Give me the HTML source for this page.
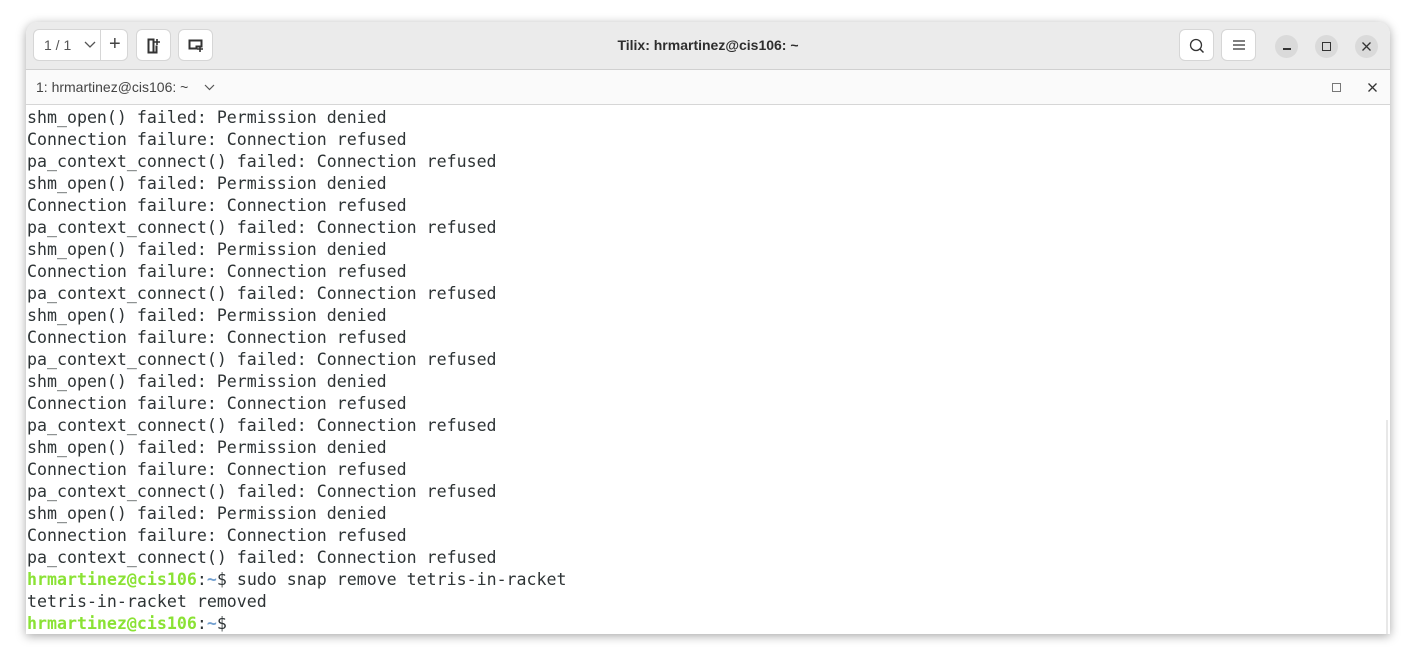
<!DOCTYPE html><html><head><style>
body{margin:0;width:1416px;height:664px;background:#fff;position:relative;overflow:hidden;font-family:"Liberation Sans",sans-serif}
.win{position:absolute;left:26px;top:22px;width:1364px;height:612px;border-radius:12px 12px 0 0;box-shadow:0 2px 10px rgba(0,0,0,.35);overflow:hidden;background:#fff}
.hdr{position:absolute;left:0;top:0;width:100%;height:47px;background:#ebebeb;border-bottom:1px solid #d0d0d0}
.btn{position:absolute;top:7px;height:32px;background:#fff;border:1px solid #d6d6d6;border-radius:6px;box-sizing:border-box}
.title{position:absolute;left:0;width:100%;top:15px;text-align:center;font-size:14px;font-weight:bold;color:#2e2e2e}
.circ{position:absolute;top:13px;width:23px;height:23px;border-radius:50%;background:#dadada}
.tab{position:absolute;left:0;top:48px;width:100%;height:34px;background:#fafafa;border-bottom:1px solid #d6d6d6;font-size:14px;color:#444}
.term{position:absolute;left:1px;top:85px;font-family:"DejaVu Sans Mono",monospace;font-size:16.6px;line-height:22px;color:#2e3436;white-space:pre}
.g{color:#8ae234;font-weight:bold}.b{color:#729fcf;font-weight:bold}
</style></head><body>
<div class="win">
<div class="hdr">
<div class="btn" style="left:7px;width:95px"><span style="position:absolute;left:10px;top:7px;font-size:14px;color:#555">1 / 1</span>
<svg style="position:absolute;left:50px;top:11px" width="12" height="8"><path d="M1 1l5 5 5-5" fill="none" stroke="#555" stroke-width="1.3"/></svg>
<div style="position:absolute;left:66px;top:0;width:1px;height:30px;background:#d6d6d6"></div>
<span style="position:absolute;left:75px;top:3px;font-size:20px;color:#444">+</span></div>
<div class="btn" style="left:110px;width:35px"><svg style="position:absolute;left:10px;top:8px" width="14" height="16"><path d="M1.5 1.5h5v13h-5z" fill="none" stroke="#333" stroke-width="2"/><path d="M6.5 14.5h3v-7" fill="none" stroke="#333" stroke-width="2"/><path d="M10 1v6M7 4h6" stroke="#333" stroke-width="1.6"/></svg></div>
<div class="btn" style="left:152px;width:35px"><svg style="position:absolute;left:9px;top:9px" width="18" height="14"><path d="M1.5 1.5h12v6h-5v2h-7z" fill="none" stroke="#333" stroke-width="2"/><path d="M12 7v6M9 10h6" stroke="#333" stroke-width="1.6"/></svg></div>
<div class="title">Tilix: hrmartinez@cis106: ~</div>
<div class="btn" style="left:1153px;width:35px"><svg style="position:absolute;left:9px;top:8px" width="16" height="16"><circle cx="7" cy="7" r="5.5" fill="none" stroke="#333" stroke-width="1.3"/><path d="M11 11l3.5 3.5" stroke="#333" stroke-width="1.5"/></svg></div>
<div class="btn" style="left:1195px;width:35px"><svg style="position:absolute;left:11px;top:10px" width="12" height="10"><path d="M0 1h12M0 5h12M0 9h12" stroke="#333" stroke-width="1.2"/></svg></div>
<div class="circ" style="left:1249px"><div style="position:absolute;left:8px;top:13px;width:8px;height:1.5px;background:#333"></div></div>
<div class="circ" style="left:1289px"><div style="position:absolute;left:7px;top:7px;width:7px;height:7px;border:1.3px solid #333"></div></div>
<div class="circ" style="left:1329px"><svg style="position:absolute;left:7px;top:7px" width="9" height="9"><path d="M0.5 .5l8 8M8.5 .5l-8 8" stroke="#333" stroke-width="1.3"/></svg></div>
</div>
<div class="tab"><span style="position:absolute;left:10px;top:9px">1: hrmartinez@cis106: ~</span>
<svg style="position:absolute;left:178px;top:14px" width="11" height="7"><path d="M1 1l4.5 4.5 4.5-4.5" fill="none" stroke="#555" stroke-width="1.2"/></svg>
<div style="position:absolute;left:1306px;top:13px;width:7px;height:7px;border:1px solid #777"></div>
<svg style="position:absolute;left:1342px;top:13px" width="9" height="9"><path d="M.5 .5l8 8M8.5 .5l-8 8" stroke="#333" stroke-width="1.3"/></svg>
</div>
<div style="position:absolute;left:1360px;top:398px;width:2px;height:214px;background:#e8e8e8"></div>
<div class="term">shm_open() failed: Permission denied
Connection failure: Connection refused
pa_context_connect() failed: Connection refused
shm_open() failed: Permission denied
Connection failure: Connection refused
pa_context_connect() failed: Connection refused
shm_open() failed: Permission denied
Connection failure: Connection refused
pa_context_connect() failed: Connection refused
shm_open() failed: Permission denied
Connection failure: Connection refused
pa_context_connect() failed: Connection refused
shm_open() failed: Permission denied
Connection failure: Connection refused
pa_context_connect() failed: Connection refused
shm_open() failed: Permission denied
Connection failure: Connection refused
pa_context_connect() failed: Connection refused
shm_open() failed: Permission denied
Connection failure: Connection refused
pa_context_connect() failed: Connection refused
<span class="g">hrmartinez@cis106</span>:<span class="b">~</span>$ sudo snap remove tetris-in-racket
tetris-in-racket removed
<span class="g">hrmartinez@cis106</span>:<span class="b">~</span>$ </div>
</div>
</body></html>
